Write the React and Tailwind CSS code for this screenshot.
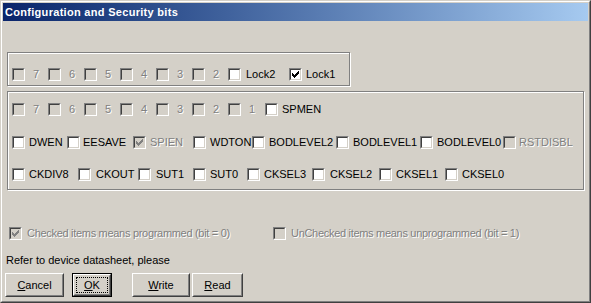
import React from "react";

function Check({ dim }) {
  return (
    <svg
      width="7"
      height="7"
      viewBox="0 0 7 7"
      shapeRendering="crispEdges"
      className="absolute left-[1px] top-[1px]"
    >
      <path
        fill={dim ? "#808080" : "#000000"}
        d="M6 0h1v3h-1z M5 1h1v3h-1z M4 2h1v3h-1z M3 3h1v3h-1z M2 4h1v3h-1z M1 3h1v3h-1z M0 2h1v3h-1z"
      />
    </svg>
  );
}

function Box({ checked, disabled }) {
  return (
    <div className="w-[13px] h-[13px] shrink-0 border border-t-[#808080] border-l-[#808080] border-b-white border-r-white">
      <div
        className={
          disabled
            ? "relative w-full h-full border border-t-[#404040] border-l-[#404040] border-b-[#d4d0c8] border-r-[#d4d0c8] bg-[#d4d0c8]"
            : "relative w-full h-full border border-t-[#404040] border-l-[#404040] border-b-[#d4d0c8] border-r-[#d4d0c8] bg-white"
        }
      >
        {checked && <Check dim={disabled} />}
      </div>
    </div>
  );
}

function Item({ w, ml, label, disabled, checked, tight }) {
  return (
    <div className={`${w} shrink-0 flex items-center overflow-hidden`}>
      <Box checked={checked} disabled={disabled} />
      <span
        className={
          (disabled
            ? "text-[#808080] [text-shadow:1px_1px_0_#fff] "
            : "text-black ") +
          ml +
          (tight ? " tracking-[-0.3px]" : "") +
          " whitespace-nowrap"
        }
      >
        {label}
      </span>
    </div>
  );
}

const bits = ["7", "6", "5", "4", "3", "2"];

const row3 = [
  { label: "DWEN", w: "w-[55px]", ml: "ml-[4px]" },
  { label: "EESAVE", w: "w-[66px]", ml: "ml-[3px]" },
  { label: "SPIEN", w: "w-[60px]", ml: "ml-[4px]", disabled: true, checked: true },
  { label: "WDTON", w: "w-[59px]", ml: "ml-[4px]" },
  { label: "BODLEVEL2", w: "w-[84px]", ml: "ml-[4px]" },
  { label: "BODLEVEL1", w: "w-[84px]", ml: "ml-[4px]" },
  { label: "BODLEVEL0", w: "w-[83px]", ml: "ml-[4px]" },
  { label: "RSTDISBL", w: "w-[70px]", ml: "ml-[3px]", disabled: true },
];

const row4 = [
  { label: "CKDIV8", w: "w-[66px]", ml: "ml-[4px]" },
  { label: "CKOUT", w: "w-[60px]", ml: "ml-[5px]" },
  { label: "SUT1", w: "w-[55px]", ml: "ml-[5px]" },
  { label: "SUT0", w: "w-[54px]", ml: "ml-[4px]" },
  { label: "CKSEL3", w: "w-[65px]", ml: "ml-[4px]" },
  { label: "CKSEL2", w: "w-[67px]", ml: "ml-[5px]" },
  { label: "CKSEL1", w: "w-[66px]", ml: "ml-[4px]" },
  { label: "CKSEL0", w: "w-[60px]", ml: "ml-[4px]" },
];

function Btn({ w, ml, children, def }) {
  const face = (
    <div className="h-full w-full border border-t-white border-l-white border-b-[#404040] border-r-[#404040]">
      <div className="h-full w-full border border-t-[#d4d0c8] border-l-[#d4d0c8] border-b-[#808080] border-r-[#808080] p-px">
        {def ? (
          <div className="h-full w-full border border-dotted border-black flex items-center justify-center">
            {children}
          </div>
        ) : (
          <div className="h-full w-full flex items-center justify-center">
            {children}
          </div>
        )}
      </div>
    </div>
  );
  return (
    <div className={`${w} ${ml} h-[24px] shrink-0`}>
      {def ? <div className="h-full w-full border border-black">{face}</div> : face}
    </div>
  );
}

export default function App() {
  return (
    <div className="w-[591px] h-[303px] bg-[#d4d0c8] border border-t-[#d4d0c8] border-l-[#d4d0c8] border-b-[#404040] border-r-[#404040] font-['Liberation_Sans',Arial,sans-serif] text-[11px] leading-[13px] text-black overflow-hidden">
      <div className="h-full border border-t-white border-l-white border-b-[#808080] border-r-[#808080] p-px flex flex-col">
        <div className="h-[18px] shrink-0 bg-linear-to-r from-[#0a246a] to-[#a6caf0] flex items-center pl-[2px] text-white font-bold tracking-[0.3px]">
          Configuration and Security bits
        </div>

        <div className="flex flex-col">
          {/* Lock bits group */}
          <div className="ml-[4px] mt-[31px] w-[343px] h-[34px] border border-[#808080] shadow-[inset_1px_1px_0_#fff,1px_1px_0_#fff] pt-[10px] pl-[4px] flex">
            {bits.map((b) => (
              <Item key={b} w="w-[36px]" ml="ml-[8px]" label={b} disabled />
            ))}
            <Item w="w-[61px]" ml="ml-[5px]" label="Lock2" />
            <Item w="w-[50px]" ml="ml-[4px]" label="Lock1" checked />
          </div>

          {/* Fuse bits group */}
          <div className="ml-[4px] mt-[5px] w-[577px] h-[99px] border border-[#808080] shadow-[inset_1px_1px_0_#fff,1px_1px_0_#fff] pt-[11px] pl-[4px] flex flex-col">
            <div className="flex">
              {bits.map((b) => (
                <Item key={b} w="w-[36px]" ml="ml-[8px]" label={b} disabled />
              ))}
              <Item w="w-[37px]" ml="ml-[8px]" label="1" disabled />
              <Item w="w-[60px]" ml="ml-[4px]" label="SPMEN" />
            </div>
            <div className="flex mt-[20px]">
              {row3.map((it) => (
                <Item key={it.label} {...it} />
              ))}
            </div>
            <div className="flex mt-[19px]">
              {row4.map((it) => (
                <Item key={it.label} {...it} />
              ))}
            </div>
          </div>

          {/* Legend */}
          <div className="ml-[6px] mt-[37px] flex">
            <Item
              w="w-[264px]"
              ml="ml-[5px]"
              label="Checked items means programmed (bit = 0)"
              disabled
              checked
              tight
            />
            <Item
              w="w-[260px]"
              ml="ml-[5px]"
              label="UnChecked items means unprogrammed (bit = 1)"
              disabled
              tight
            />
          </div>

          <div className="ml-[3px] mt-[14px]">Refer to device datasheet, please</div>

          <div className="mt-[6px] flex">
            <Btn w="w-[59px]" ml="ml-[2px]">
              <span>
                <span className="underline underline-offset-[1px]">C</span>ancel
              </span>
            </Btn>
            <Btn w="w-[40px]" ml="ml-[8px]" def>
              <span>
                <span className="underline underline-offset-[1px]">O</span>K
              </span>
            </Btn>
            <Btn w="w-[58px]" ml="ml-[20px]">
              <span>
                <span className="underline underline-offset-[1px]">W</span>rite
              </span>
            </Btn>
            <Btn w="w-[51px]" ml="ml-[2px]">
              <span>
                <span className="underline underline-offset-[1px]">R</span>ead
              </span>
            </Btn>
          </div>
        </div>
      </div>
    </div>
  );
}
